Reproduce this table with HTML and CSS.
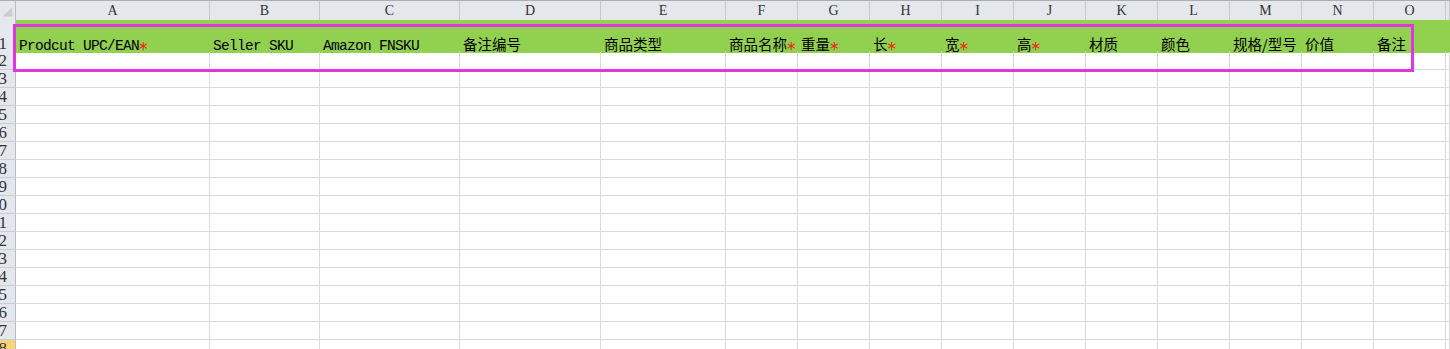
FILE: index.html
```html
<!DOCTYPE html>
<html lang="zh-CN">
<head>
<meta charset="utf-8">
<title>Sheet</title>
<link rel="stylesheet" href="styles.css">
</head>
<body>
<div class="sheet">
  <div class="row hdr">
    <div class="corner"><svg width="16" height="19" viewBox="0 0 16 19"><polygon points="13,6 13,16 3,16" fill="#c9cdd3"/></svg></div>
    <div class="ch">A</div><div class="ch">B</div><div class="ch">C</div><div class="ch">D</div><div class="ch">E</div><div class="ch">F</div><div class="ch">G</div><div class="ch">H</div><div class="ch">I</div><div class="ch">J</div><div class="ch">K</div><div class="ch">L</div><div class="ch">M</div><div class="ch">N</div><div class="ch">O</div><div class="ch"></div>
  </div>
  <div class="row r1">
    <div class="rh"><span>1</span></div>
    <div class="g"><span class="lt">Prodcut UPC/EAN</span><span class="req">*</span></div>
    <div class="g"><span class="lt">Seller SKU</span></div>
    <div class="g"><span class="lt">Amazon FNSKU</span></div>
    <div class="g"><span class="cj">备注编号</span></div>
    <div class="g"><span class="cj">商品类型</span></div>
    <div class="g"><span class="cj">商品名称</span><span class="req">*</span></div>
    <div class="g"><span class="cj">重量</span><span class="req">*</span></div>
    <div class="g"><span class="cj">长</span><span class="req">*</span></div>
    <div class="g"><span class="cj">宽</span><span class="req">*</span></div>
    <div class="g"><span class="cj">高</span><span class="req">*</span></div>
    <div class="g"><span class="cj">材质</span></div>
    <div class="g"><span class="cj">颜色</span></div>
    <div class="g"><span class="cj">规格/型号</span></div>
    <div class="g"><span class="cj">价值</span></div>
    <div class="g"><span class="cj">备注</span></div>
    <div class="g"></div>
  </div>
  <div class="row"><div class="rh"><span>2</span></div><div class="c"></div><div class="c"></div><div class="c"></div><div class="c"></div><div class="c"></div><div class="c"></div><div class="c"></div><div class="c"></div><div class="c"></div><div class="c"></div><div class="c"></div><div class="c"></div><div class="c"></div><div class="c"></div><div class="c"></div><div class="c"></div></div>
  <div class="row"><div class="rh"><span>3</span></div><div class="c"></div><div class="c"></div><div class="c"></div><div class="c"></div><div class="c"></div><div class="c"></div><div class="c"></div><div class="c"></div><div class="c"></div><div class="c"></div><div class="c"></div><div class="c"></div><div class="c"></div><div class="c"></div><div class="c"></div><div class="c"></div></div>
  <div class="row"><div class="rh"><span>4</span></div><div class="c"></div><div class="c"></div><div class="c"></div><div class="c"></div><div class="c"></div><div class="c"></div><div class="c"></div><div class="c"></div><div class="c"></div><div class="c"></div><div class="c"></div><div class="c"></div><div class="c"></div><div class="c"></div><div class="c"></div><div class="c"></div></div>
  <div class="row"><div class="rh"><span>5</span></div><div class="c"></div><div class="c"></div><div class="c"></div><div class="c"></div><div class="c"></div><div class="c"></div><div class="c"></div><div class="c"></div><div class="c"></div><div class="c"></div><div class="c"></div><div class="c"></div><div class="c"></div><div class="c"></div><div class="c"></div><div class="c"></div></div>
  <div class="row"><div class="rh"><span>6</span></div><div class="c"></div><div class="c"></div><div class="c"></div><div class="c"></div><div class="c"></div><div class="c"></div><div class="c"></div><div class="c"></div><div class="c"></div><div class="c"></div><div class="c"></div><div class="c"></div><div class="c"></div><div class="c"></div><div class="c"></div><div class="c"></div></div>
  <div class="row"><div class="rh"><span>7</span></div><div class="c"></div><div class="c"></div><div class="c"></div><div class="c"></div><div class="c"></div><div class="c"></div><div class="c"></div><div class="c"></div><div class="c"></div><div class="c"></div><div class="c"></div><div class="c"></div><div class="c"></div><div class="c"></div><div class="c"></div><div class="c"></div></div>
  <div class="row"><div class="rh"><span>8</span></div><div class="c"></div><div class="c"></div><div class="c"></div><div class="c"></div><div class="c"></div><div class="c"></div><div class="c"></div><div class="c"></div><div class="c"></div><div class="c"></div><div class="c"></div><div class="c"></div><div class="c"></div><div class="c"></div><div class="c"></div><div class="c"></div></div>
  <div class="row"><div class="rh"><span>9</span></div><div class="c"></div><div class="c"></div><div class="c"></div><div class="c"></div><div class="c"></div><div class="c"></div><div class="c"></div><div class="c"></div><div class="c"></div><div class="c"></div><div class="c"></div><div class="c"></div><div class="c"></div><div class="c"></div><div class="c"></div><div class="c"></div></div>
  <div class="row"><div class="rh"><span>10</span></div><div class="c"></div><div class="c"></div><div class="c"></div><div class="c"></div><div class="c"></div><div class="c"></div><div class="c"></div><div class="c"></div><div class="c"></div><div class="c"></div><div class="c"></div><div class="c"></div><div class="c"></div><div class="c"></div><div class="c"></div><div class="c"></div></div>
  <div class="row"><div class="rh"><span>11</span></div><div class="c"></div><div class="c"></div><div class="c"></div><div class="c"></div><div class="c"></div><div class="c"></div><div class="c"></div><div class="c"></div><div class="c"></div><div class="c"></div><div class="c"></div><div class="c"></div><div class="c"></div><div class="c"></div><div class="c"></div><div class="c"></div></div>
  <div class="row"><div class="rh"><span>12</span></div><div class="c"></div><div class="c"></div><div class="c"></div><div class="c"></div><div class="c"></div><div class="c"></div><div class="c"></div><div class="c"></div><div class="c"></div><div class="c"></div><div class="c"></div><div class="c"></div><div class="c"></div><div class="c"></div><div class="c"></div><div class="c"></div></div>
  <div class="row"><div class="rh"><span>13</span></div><div class="c"></div><div class="c"></div><div class="c"></div><div class="c"></div><div class="c"></div><div class="c"></div><div class="c"></div><div class="c"></div><div class="c"></div><div class="c"></div><div class="c"></div><div class="c"></div><div class="c"></div><div class="c"></div><div class="c"></div><div class="c"></div></div>
  <div class="row"><div class="rh"><span>14</span></div><div class="c"></div><div class="c"></div><div class="c"></div><div class="c"></div><div class="c"></div><div class="c"></div><div class="c"></div><div class="c"></div><div class="c"></div><div class="c"></div><div class="c"></div><div class="c"></div><div class="c"></div><div class="c"></div><div class="c"></div><div class="c"></div></div>
  <div class="row"><div class="rh"><span>15</span></div><div class="c"></div><div class="c"></div><div class="c"></div><div class="c"></div><div class="c"></div><div class="c"></div><div class="c"></div><div class="c"></div><div class="c"></div><div class="c"></div><div class="c"></div><div class="c"></div><div class="c"></div><div class="c"></div><div class="c"></div><div class="c"></div></div>
  <div class="row"><div class="rh"><span>16</span></div><div class="c"></div><div class="c"></div><div class="c"></div><div class="c"></div><div class="c"></div><div class="c"></div><div class="c"></div><div class="c"></div><div class="c"></div><div class="c"></div><div class="c"></div><div class="c"></div><div class="c"></div><div class="c"></div><div class="c"></div><div class="c"></div></div>
  <div class="row"><div class="rh"><span>17</span></div><div class="c"></div><div class="c"></div><div class="c"></div><div class="c"></div><div class="c"></div><div class="c"></div><div class="c"></div><div class="c"></div><div class="c"></div><div class="c"></div><div class="c"></div><div class="c"></div><div class="c"></div><div class="c"></div><div class="c"></div><div class="c"></div></div>
  <div class="row"><div class="rh sel-row"><span>18</span></div><div class="c"></div><div class="c"></div><div class="c"></div><div class="c"></div><div class="c"></div><div class="c"></div><div class="c"></div><div class="c"></div><div class="c"></div><div class="c"></div><div class="c"></div><div class="c"></div><div class="c"></div><div class="c"></div><div class="c"></div><div class="c"></div></div>
  <div class="highlight"></div>
</div>
</body>
</html>
```

FILE: styles.css
```css
html, body {
  margin: 0;
  padding: 0;
  background: #ffffff;
  overflow: hidden;
}

.sheet {
  position: relative;
  width: 1450px;
  height: 349px;
  overflow: hidden;
  font-family: "Liberation Mono", "Noto Sans CJK SC", monospace;
  color: #000;
}

.row {
  display: grid;
  grid-template-columns: 16px 194px 110px 140px 141px 125px repeat(10, 72px) 1fr;
  height: 18px;
}

.hdr {
  height: 20px;
  box-sizing: border-box;
  border-top: 1px solid #abafb5;
  background: #e4e7eb;
}

.corner {
  box-sizing: border-box;
  border-right: 1px solid #b8bdc4;
  border-bottom: 1px solid #b8bdc4;
  display: flex;
}

.ch {
  box-sizing: border-box;
  border-right: 1px solid #c4c8ce;
  border-bottom: 1px solid #b8bdc4;
  display: flex;
  align-items: center;
  justify-content: center;
  font-family: "Liberation Serif", serif;
  font-size: 14px;
  color: #333;
  line-height: 18px;
}

.rh {
  box-sizing: border-box;
  background: #e4e7eb;
  border-right: 1px solid #b8bdc4;
  border-bottom: 1px solid #c9ced6;
  display: flex;
  justify-content: flex-end;
  align-items: flex-end;
  overflow: hidden;
  padding-right: 8px;
  font-family: "Liberation Serif", serif;
  font-size: 17px;
  line-height: 16px;
  color: #333;
  white-space: nowrap;
}

.rh.sel-row {
  background: #f8d47a;
}

.c {
  box-sizing: border-box;
  border-right: 1px solid #dadada;
  border-bottom: 1px solid #dadada;
}

.r1 {
  height: 32px;
}

.g {
  background: #92d050;
  box-sizing: border-box;
  padding: 19px 0 0 3px;
  white-space: nowrap;
  font-family: "Liberation Mono", monospace;
  font-size: 14.5px;
  line-height: 14px;
}

.lt {
  letter-spacing: -0.7px;
}

.cj {
  font-family: "Noto Sans CJK SC", sans-serif;
  font-size: 14.5px;
  line-height: 0;
}

.req {
  font-family: "DejaVu Sans", sans-serif;
  font-size: 17px;
  letter-spacing: -1px;
  line-height: 0;
  color: #ee2211;
  vertical-align: -4.5px;
}

.highlight {
  position: absolute;
  left: 13px;
  top: 24px;
  width: 1401px;
  height: 48px;
  box-sizing: border-box;
  border: 3px solid #e035e0;
  pointer-events: none;
}
```
